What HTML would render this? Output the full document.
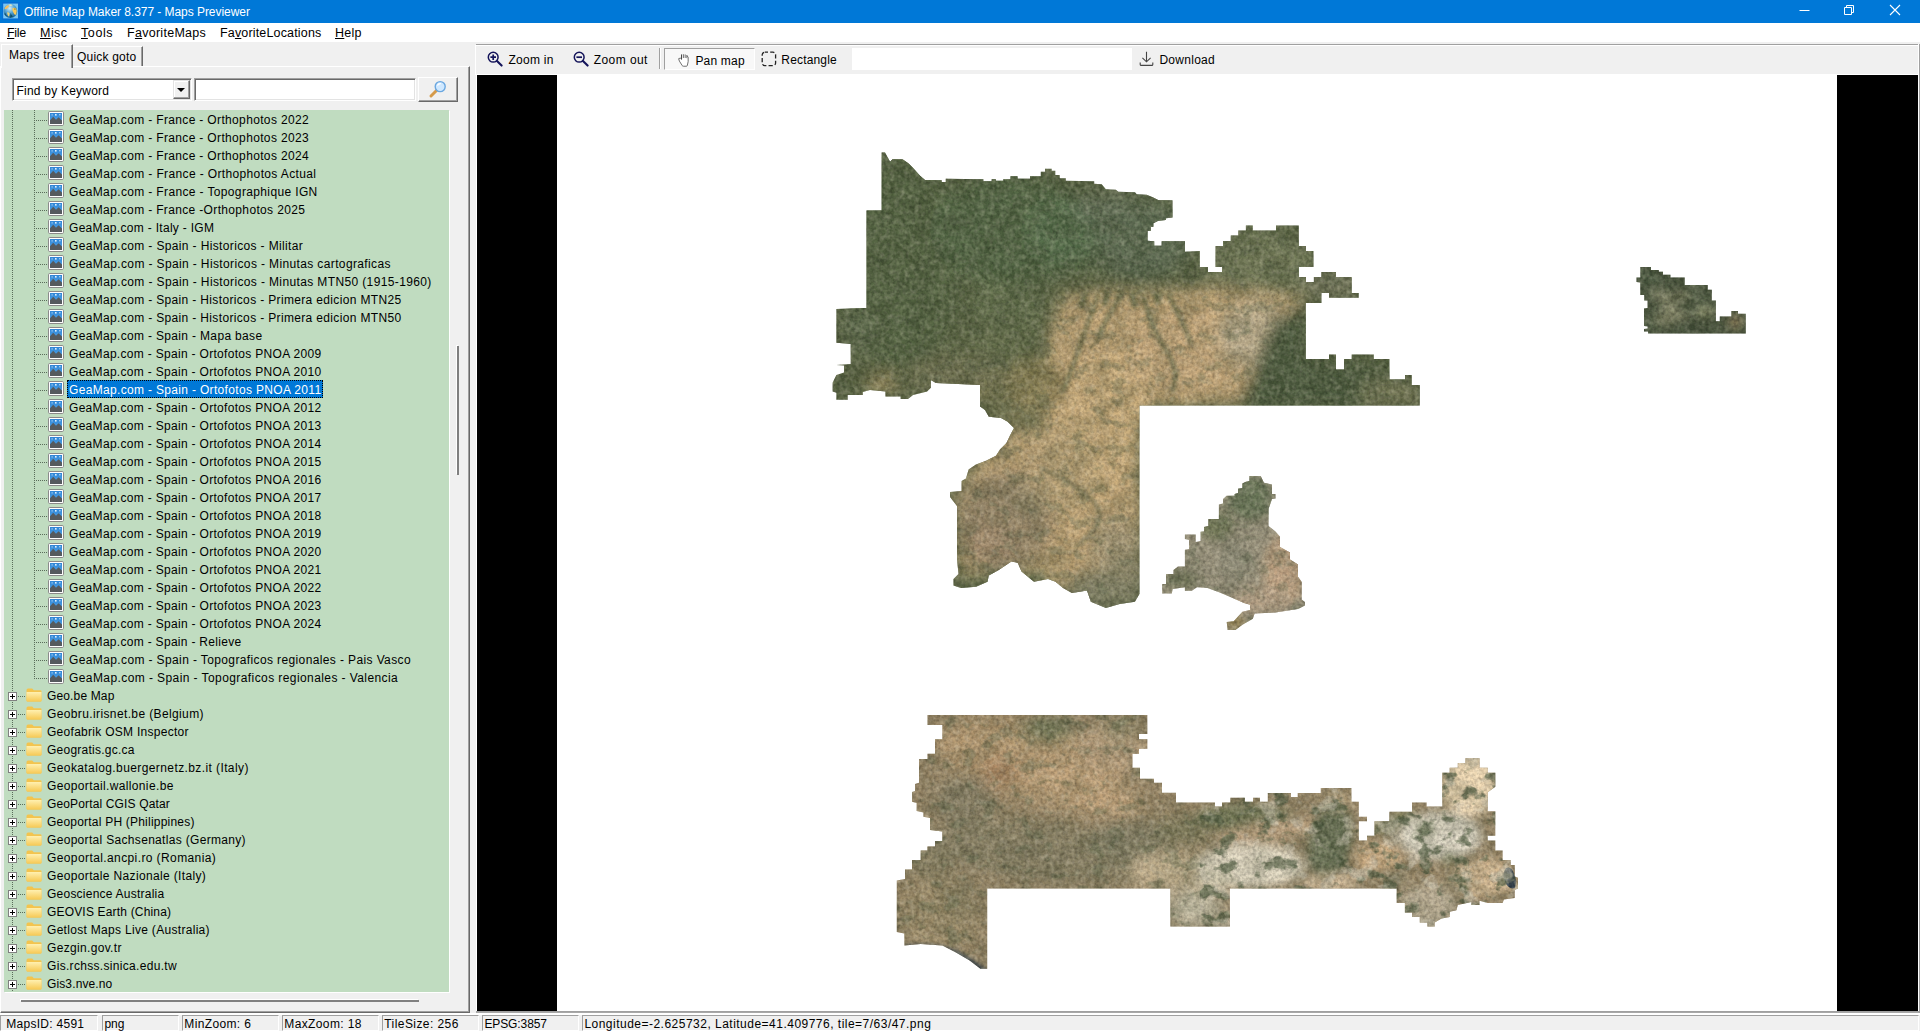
<!DOCTYPE html>
<html lang="en"><head><meta charset="utf-8"><title>Offline Map Maker 8.377 - Maps Previewer</title>
<style>
*{box-sizing:border-box;margin:0;padding:0}
html,body{width:1920px;height:1032px;overflow:hidden;background:#f0f0f0}
body{position:relative;font-family:"Liberation Sans",sans-serif;font-size:12px;color:#000;-webkit-font-smoothing:antialiased}
i{display:block;position:absolute;font-style:normal}
#titlebar{position:absolute;left:0;top:0;width:1920px;height:23px;background:#0078d7}
#appicon{position:absolute;left:1.6px;top:2px}
#title{position:absolute;left:24px;top:5px;color:#fff;font-size:12px;line-height:14px;letter-spacing:-0.05px;white-space:nowrap}
#wc{position:absolute;left:1780px;top:0}
#menubar{position:absolute;left:0;top:23px;width:1920px;height:19px;background:#fff}
#menubar span{position:absolute;top:3px;font-size:12.5px;line-height:14px;letter-spacing:0.28px;white-space:nowrap}
#menubar u{text-decoration:underline;text-underline-offset:1px}
#leftpanel{position:absolute;left:0;top:43px;width:472px;height:970px}
#tabpage{position:absolute;left:0;top:23px;width:470px;height:947px;border:1px solid #fff;border-right:1px solid #696969;border-bottom:1px solid #696969;background:#f0f0f0;box-shadow:inset -1px -1px 0 #a0a0a0}
.tab{position:absolute;white-space:nowrap;font-size:12px;line-height:14px}
#tab1{left:1px;top:1px;width:72px;height:24px;padding:3px 0 0 7px;letter-spacing:0.3px;background:#f0f0f0;border-top:1px solid #fff;border-left:1px solid #fff;border-right:1px solid #696969;box-shadow:inset -1px 0 0 #a0a0a0}
#tab2{left:73px;top:3px;width:70px;height:20px;padding:3px 0 0 4px;letter-spacing:0.2px;border-top:1px solid #fff;border-right:1px solid #696969;box-shadow:inset -1px 0 0 #a0a0a0}
#combo{position:absolute;left:12px;top:35px;width:180px;height:23px;background:#fff;border:1px solid #a0a0a0;border-right-color:#fff;border-bottom-color:#fff;box-shadow:inset 1px 1px 0 #696969,inset -1px -1px 0 #e3e3e3}
#combo span{position:absolute;left:3.5px;top:5px;line-height:14px;letter-spacing:0.22px;white-space:nowrap}
#combobtn{position:absolute;right:1px;top:1px;width:17px;height:19px;background:#f0f0f0;border:1px solid #e3e3e3;border-right-color:#696969;border-bottom-color:#696969;box-shadow:inset -1px -1px 0 #a0a0a0,inset 1px 1px 0 #fff}
#combobtn i{left:3px;top:7px;border:4px solid transparent;border-top:4px solid #000;border-bottom:0}
#kw{position:absolute;left:194px;top:35px;width:222px;height:23px;background:#fff;border:1px solid #a0a0a0;border-right-color:#fff;border-bottom-color:#fff;box-shadow:inset 1px 1px 0 #696969,inset -1px -1px 0 #e3e3e3}
#searchbtn{position:absolute;left:418px;top:34px;width:40px;height:25px;background:#f0f0f0;border:1px solid #fff;border-right-color:#696969;border-bottom-color:#696969;box-shadow:inset -1px -1px 0 #a0a0a0}
#searchbtn svg{position:absolute;left:9px;top:1px}
#tree{position:absolute;left:4px;top:67px;width:445px;height:882px;background:#c0dcc0;overflow:hidden;box-shadow:1px 1px 0 #fff}
#vline1{left:8px;top:0;width:1px;height:100%;background-image:linear-gradient(#5a6c5a 50%,transparent 50%);background-size:1px 2px}
#vline2{left:30px;top:0;width:1px;background-image:linear-gradient(#5a6c5a 50%,transparent 50%);background-size:1px 2px}
.row{position:absolute;left:0;width:445px;height:18px;white-space:nowrap}
.row .lbl{position:absolute;top:0;height:18px;line-height:15px;padding:3px 2px 0 2px;font-size:12px}
.leaf .lbl{left:63px}
.fold .lbl{left:41px}
.lbl.sel{background:#0078d7;color:#fff;outline:1px dotted #000;outline-offset:-1px}
.pic{position:absolute;left:44px;top:1px}
.fld{position:absolute;left:22px;top:1px}
.hl{left:32px;top:10px;width:12px;height:1px;background-image:linear-gradient(90deg,#5a6c5a 50%,transparent 50%);background-size:2px 1px}
.hl2{left:14px;top:10px;width:8px;height:1px;background-image:linear-gradient(90deg,#5a6c5a 50%,transparent 50%);background-size:2px 1px}
.plus{left:4px;top:6px;width:9px;height:9px;border:1px solid #808080;background:#fff}
.plus:before{content:"";position:absolute;left:1px;top:3px;width:5px;height:1px;background:#000}
.plus:after{content:"";position:absolute;left:3px;top:1px;width:1px;height:5px;background:#000}
#vthumb{left:457px;top:303px;width:2px;height:129px;background:#808080;box-shadow:-1px -1px 0 #fff}
#hthumb{left:21px;top:957px;width:398px;height:2px;background:#808080;box-shadow:-1px -1px 0 #fff}
#splitter{position:absolute;left:475px;top:45px;width:1px;height:30px;background:#fff}
#splitter2{position:absolute;left:476px;top:75px;width:1px;height:936px;background:#fff}
#redge{position:absolute;left:1918px;top:44px;width:2px;height:969px;border-left:1px solid #fff;border-right:1px solid #a0a0a0}
#bedge{position:absolute;left:476px;top:1011px;width:1443px;height:2px;border-top:1px solid #a0a0a0;background:#a8a8a8}
#toolbar{position:absolute;left:476px;top:44px;width:1442px;height:31px;border-top:1px solid #a0a0a0;border-bottom:1px solid #fff;box-shadow:inset 0 1px 0 #fff;background:#f0f0f0}
.tb{position:absolute;top:4px;height:22px}
.tb svg{position:absolute;left:0;top:2px}
.tb span{position:absolute;left:21px;top:4px;line-height:14px;white-space:nowrap}
#tbsep{left:183px;top:3px;width:2px;height:21px;border-left:1px solid #a0a0a0;border-right:1px solid #fff}
#panbtn{position:absolute;left:188px;top:3px;width:91px;height:22px;background:#f8f8f8;border:1px solid #a0a0a0;border-right-color:#fff;border-bottom-color:#fff}
#panbtn svg{position:absolute;left:12.6px;top:4.6px}
#panbtn span{position:absolute;left:30px;top:5px;line-height:14px;white-space:nowrap}
#tbedit{position:absolute;left:376px;top:3px;width:280px;height:22px;background:#fff}
#mapwrap{position:absolute;left:477px;top:75px;width:1441px;height:936px;background:#fff;overflow:hidden}
#mapwrap svg{position:absolute;left:0;top:0}
#statusbar{position:absolute;left:0;top:1013px;width:1920px;height:19px;background:#f0f0f0;border-top:2px solid #fff;border-bottom:1px solid #fff}
.sp{position:absolute;top:0;height:16px;border:1px solid #a0a0a0;border-right-color:#fff;border-bottom-color:#fff}
.sp span{position:absolute;left:3px;top:1px;line-height:14px;white-space:nowrap;font-size:12px}

</style></head><body>
<svg width="0" height="0" style="position:absolute">
<defs>
<linearGradient id="gsky" x1="0" y1="0" x2="0" y2="1"><stop offset="0" stop-color="#2f86d6"/><stop offset="1" stop-color="#56a6e8"/></linearGradient>
<linearGradient id="gfold" x1="0" y1="0" x2="0" y2="1"><stop offset="0" stop-color="#fff0b0"/><stop offset="1" stop-color="#f6c955"/></linearGradient>
<g id="ic-pic">
 <rect x="0.5" y="0.5" width="15" height="14" rx="1.2" fill="#fff" stroke="#8a8a8a"/>
 <rect x="2" y="2" width="12" height="11" fill="url(#gsky)"/>
 <path d="M2 13 V9.2 L5.2 5.8 L8 8.8 L10.6 6.2 L14 9.6 V13 Z" fill="#555a5e"/>
 <rect x="3.6" y="3.4" width="1" height="1" fill="#dff0ff"/><rect x="7" y="3" width="1.6" height="1.6" fill="#dff0ff"/><rect x="11.4" y="3" width="1" height="1.4" fill="#dff0ff"/>
</g>
<g id="ic-fold">
 <path d="M0.5 3.2 Q0.5 1.5 2 1.5 H6.2 L7.8 3.2 H14.6 Q15.5 3.2 15.5 4.2 V13.5 Q15.5 14.5 14.5 14.5 H1.5 Q0.5 14.5 0.5 13.5 Z" fill="#f3c44e"/>
 <path d="M0.5 5 H15.5 V13.5 Q15.5 14.5 14.5 14.5 H1.5 Q0.5 14.5 0.5 13.5 Z" fill="url(#gfold)"/>
</g>
</defs></svg>

<div id="titlebar">
 <svg id="appicon" width="18" height="18" viewBox="0 0 18 18"><defs><radialGradient id="gglobe" cx="0.45" cy="0.3" r="0.75"><stop offset="0" stop-color="#d6ecf4"/><stop offset="0.45" stop-color="#5aa6d6"/><stop offset="1" stop-color="#125a8c"/></radialGradient><filter id="ib"><feGaussianBlur stdDeviation="0.45"/></filter></defs><rect x="0" y="0" width="18" height="18" fill="#0a66d2" opacity="0.55"/><rect x="1.2" y="1.6" width="14.8" height="14.8" fill="#7cc6f4"/><g filter="url(#ib)"><circle cx="8.4" cy="9" r="6.9" fill="url(#gglobe)"/><path d="M2.4 6.6 Q3.6 3.4 6.4 3 Q7.6 4.2 6.2 5.8 Q5 6.8 3.6 7.2Z" fill="#f3bf62"/><path d="M6.2 2.8 Q8.6 1.6 10.6 3.2 Q9 4.2 7.6 3.8Z" fill="#e6e8c0"/><path d="M10.2 6.4 Q12.4 5.2 14.2 6.4 Q15.4 9 14.2 12.4 Q12.4 13.6 11.6 11 Q10.2 8.6 10.2 6.4Z" fill="#f6c95c"/><path d="M12.2 6.6 l1.6 0.2 l-0.2 0.8 l-1.4 -0.2z" fill="#7a6a20"/><path d="M5 10.6 Q6.6 9.8 7.6 11.6 Q7.8 13.6 6.6 14.6 Q5.4 13.2 5 10.6Z" fill="#ecd27a"/><path d="M3 10.5 Q4 13.6 6 15 Q4 14.6 2.6 12.6Z M8.6 11 Q9.6 13.6 11 14.6 Q9.4 15.6 8 15.4Z" fill="#0f4f6a"/></g></svg>
 <span id="title">Offline Map Maker 8.377 - Maps Previewer</span>
 <svg id="wc" width="140" height="23" viewBox="0 0 140 23">
  <path d="M19.5 10.5 H29.5" stroke="#fff" stroke-width="1" fill="none"/>
  <path d="M64.5 7.5 H71.5 V14.5 H64.5 Z M66.5 7.5 V5.5 H73.5 V12.5 H71.5" stroke="#fff" stroke-width="1" fill="none"/>
  <path d="M110 5 L120 15 M120 5 L110 15" stroke="#fff" stroke-width="1.1" fill="none"/>
 </svg>
</div>

<div id="menubar">
 <span style="left:7px;letter-spacing:-0.35px"><u>F</u>ile</span>
 <span style="left:40px;letter-spacing:0.45px"><u>M</u>isc</span>
 <span style="left:81px;letter-spacing:0.6px"><u>T</u>ools</span>
 <span style="left:127px">F<u>a</u>voriteMaps</span>
 <span style="left:220px;letter-spacing:0.16px">Fa<u>v</u>oriteLocations</span>
 <span style="left:335px"><u>H</u>elp</span>
</div>

<div id="leftpanel">
 <div id="tabpage"></div>
 <div id="tab1" class="tab">Maps tree</div>
 <div id="tab2" class="tab">Quick goto</div>
 <div id="combo"><span>Find by Keyword</span><div id="combobtn"><i></i></div></div>
 <div id="kw"></div>
 <div id="searchbtn"><svg width="20" height="20" viewBox="0 0 20 20"><path d="M3 17 L10 10" stroke="#d59a4a" stroke-width="3" stroke-linecap="round"/><circle cx="12.2" cy="7.6" r="5" fill="#cfe8ff" stroke="#6aa7e0" stroke-width="1.4"/><path d="M9.4 6.6 Q10.4 4.4 12.8 4.6" stroke="#fff" stroke-width="1.3" fill="none"/></svg></div>
 <div id="tree">
  <i id="vline1"></i><i id="vline2" style="height:569px"></i>
  <div class="row leaf" style="top:0px"><i class="hl"></i><svg class="pic" width="16" height="16" viewBox="0 0 16 16"><use href="#ic-pic"/></svg><span class="lbl" style="letter-spacing:0.348px">GeaMap.com - France - Orthophotos 2022</span></div><div class="row leaf" style="top:18px"><i class="hl"></i><svg class="pic" width="16" height="16" viewBox="0 0 16 16"><use href="#ic-pic"/></svg><span class="lbl" style="letter-spacing:0.348px">GeaMap.com - France - Orthophotos 2023</span></div><div class="row leaf" style="top:36px"><i class="hl"></i><svg class="pic" width="16" height="16" viewBox="0 0 16 16"><use href="#ic-pic"/></svg><span class="lbl" style="letter-spacing:0.348px">GeaMap.com - France - Orthophotos 2024</span></div><div class="row leaf" style="top:54px"><i class="hl"></i><svg class="pic" width="16" height="16" viewBox="0 0 16 16"><use href="#ic-pic"/></svg><span class="lbl" style="letter-spacing:0.363px">GeaMap.com - France - Orthophotos Actual</span></div><div class="row leaf" style="top:72px"><i class="hl"></i><svg class="pic" width="16" height="16" viewBox="0 0 16 16"><use href="#ic-pic"/></svg><span class="lbl" style="letter-spacing:0.36px">GeaMap.com - France - Topographique IGN</span></div><div class="row leaf" style="top:90px"><i class="hl"></i><svg class="pic" width="16" height="16" viewBox="0 0 16 16"><use href="#ic-pic"/></svg><span class="lbl" style="letter-spacing:0.345px">GeaMap.com - France -Orthophotos 2025</span></div><div class="row leaf" style="top:108px"><i class="hl"></i><svg class="pic" width="16" height="16" viewBox="0 0 16 16"><use href="#ic-pic"/></svg><span class="lbl" style="letter-spacing:0.303px">GeaMap.com - Italy - IGM</span></div><div class="row leaf" style="top:126px"><i class="hl"></i><svg class="pic" width="16" height="16" viewBox="0 0 16 16"><use href="#ic-pic"/></svg><span class="lbl" style="letter-spacing:0.361px">GeaMap.com - Spain - Historicos - Militar</span></div><div class="row leaf" style="top:144px"><i class="hl"></i><svg class="pic" width="16" height="16" viewBox="0 0 16 16"><use href="#ic-pic"/></svg><span class="lbl" style="letter-spacing:0.372px">GeaMap.com - Spain - Historicos - Minutas cartograficas</span></div><div class="row leaf" style="top:162px"><i class="hl"></i><svg class="pic" width="16" height="16" viewBox="0 0 16 16"><use href="#ic-pic"/></svg><span class="lbl" style="letter-spacing:0.371px">GeaMap.com - Spain - Historicos - Minutas MTN50 (1915-1960)</span></div><div class="row leaf" style="top:180px"><i class="hl"></i><svg class="pic" width="16" height="16" viewBox="0 0 16 16"><use href="#ic-pic"/></svg><span class="lbl" style="letter-spacing:0.347px">GeaMap.com - Spain - Historicos - Primera edicion MTN25</span></div><div class="row leaf" style="top:198px"><i class="hl"></i><svg class="pic" width="16" height="16" viewBox="0 0 16 16"><use href="#ic-pic"/></svg><span class="lbl" style="letter-spacing:0.347px">GeaMap.com - Spain - Historicos - Primera edicion MTN50</span></div><div class="row leaf" style="top:216px"><i class="hl"></i><svg class="pic" width="16" height="16" viewBox="0 0 16 16"><use href="#ic-pic"/></svg><span class="lbl" style="letter-spacing:0.333px">GeaMap.com - Spain - Mapa base</span></div><div class="row leaf" style="top:234px"><i class="hl"></i><svg class="pic" width="16" height="16" viewBox="0 0 16 16"><use href="#ic-pic"/></svg><span class="lbl" style="letter-spacing:0.307px">GeaMap.com - Spain - Ortofotos PNOA 2009</span></div><div class="row leaf" style="top:252px"><i class="hl"></i><svg class="pic" width="16" height="16" viewBox="0 0 16 16"><use href="#ic-pic"/></svg><span class="lbl" style="letter-spacing:0.307px">GeaMap.com - Spain - Ortofotos PNOA 2010</span></div><div class="row leaf" style="top:270px"><i class="hl"></i><svg class="pic" width="16" height="16" viewBox="0 0 16 16"><use href="#ic-pic"/></svg><span class="lbl sel" style="letter-spacing:0.329px">GeaMap.com - Spain - Ortofotos PNOA 2011</span></div><div class="row leaf" style="top:288px"><i class="hl"></i><svg class="pic" width="16" height="16" viewBox="0 0 16 16"><use href="#ic-pic"/></svg><span class="lbl" style="letter-spacing:0.307px">GeaMap.com - Spain - Ortofotos PNOA 2012</span></div><div class="row leaf" style="top:306px"><i class="hl"></i><svg class="pic" width="16" height="16" viewBox="0 0 16 16"><use href="#ic-pic"/></svg><span class="lbl" style="letter-spacing:0.307px">GeaMap.com - Spain - Ortofotos PNOA 2013</span></div><div class="row leaf" style="top:324px"><i class="hl"></i><svg class="pic" width="16" height="16" viewBox="0 0 16 16"><use href="#ic-pic"/></svg><span class="lbl" style="letter-spacing:0.307px">GeaMap.com - Spain - Ortofotos PNOA 2014</span></div><div class="row leaf" style="top:342px"><i class="hl"></i><svg class="pic" width="16" height="16" viewBox="0 0 16 16"><use href="#ic-pic"/></svg><span class="lbl" style="letter-spacing:0.307px">GeaMap.com - Spain - Ortofotos PNOA 2015</span></div><div class="row leaf" style="top:360px"><i class="hl"></i><svg class="pic" width="16" height="16" viewBox="0 0 16 16"><use href="#ic-pic"/></svg><span class="lbl" style="letter-spacing:0.307px">GeaMap.com - Spain - Ortofotos PNOA 2016</span></div><div class="row leaf" style="top:378px"><i class="hl"></i><svg class="pic" width="16" height="16" viewBox="0 0 16 16"><use href="#ic-pic"/></svg><span class="lbl" style="letter-spacing:0.307px">GeaMap.com - Spain - Ortofotos PNOA 2017</span></div><div class="row leaf" style="top:396px"><i class="hl"></i><svg class="pic" width="16" height="16" viewBox="0 0 16 16"><use href="#ic-pic"/></svg><span class="lbl" style="letter-spacing:0.307px">GeaMap.com - Spain - Ortofotos PNOA 2018</span></div><div class="row leaf" style="top:414px"><i class="hl"></i><svg class="pic" width="16" height="16" viewBox="0 0 16 16"><use href="#ic-pic"/></svg><span class="lbl" style="letter-spacing:0.307px">GeaMap.com - Spain - Ortofotos PNOA 2019</span></div><div class="row leaf" style="top:432px"><i class="hl"></i><svg class="pic" width="16" height="16" viewBox="0 0 16 16"><use href="#ic-pic"/></svg><span class="lbl" style="letter-spacing:0.307px">GeaMap.com - Spain - Ortofotos PNOA 2020</span></div><div class="row leaf" style="top:450px"><i class="hl"></i><svg class="pic" width="16" height="16" viewBox="0 0 16 16"><use href="#ic-pic"/></svg><span class="lbl" style="letter-spacing:0.307px">GeaMap.com - Spain - Ortofotos PNOA 2021</span></div><div class="row leaf" style="top:468px"><i class="hl"></i><svg class="pic" width="16" height="16" viewBox="0 0 16 16"><use href="#ic-pic"/></svg><span class="lbl" style="letter-spacing:0.307px">GeaMap.com - Spain - Ortofotos PNOA 2022</span></div><div class="row leaf" style="top:486px"><i class="hl"></i><svg class="pic" width="16" height="16" viewBox="0 0 16 16"><use href="#ic-pic"/></svg><span class="lbl" style="letter-spacing:0.307px">GeaMap.com - Spain - Ortofotos PNOA 2023</span></div><div class="row leaf" style="top:504px"><i class="hl"></i><svg class="pic" width="16" height="16" viewBox="0 0 16 16"><use href="#ic-pic"/></svg><span class="lbl" style="letter-spacing:0.307px">GeaMap.com - Spain - Ortofotos PNOA 2024</span></div><div class="row leaf" style="top:522px"><i class="hl"></i><svg class="pic" width="16" height="16" viewBox="0 0 16 16"><use href="#ic-pic"/></svg><span class="lbl" style="letter-spacing:0.301px">GeaMap.com - Spain - Relieve</span></div><div class="row leaf" style="top:540px"><i class="hl"></i><svg class="pic" width="16" height="16" viewBox="0 0 16 16"><use href="#ic-pic"/></svg><span class="lbl" style="letter-spacing:0.379px">GeaMap.com - Spain - Topograficos regionales - Pais Vasco</span></div><div class="row leaf" style="top:558px"><i class="hl"></i><svg class="pic" width="16" height="16" viewBox="0 0 16 16"><use href="#ic-pic"/></svg><span class="lbl" style="letter-spacing:0.415px">GeaMap.com - Spain - Topograficos regionales - Valencia</span></div><div class="row fold" style="top:576px"><i class="hl2"></i><i class="plus"></i><svg class="fld" width="16" height="16" viewBox="0 0 16 16"><use href="#ic-fold"/></svg><span class="lbl" style="letter-spacing:0.146px">Geo.be Map</span></div><div class="row fold" style="top:594px"><i class="hl2"></i><i class="plus"></i><svg class="fld" width="16" height="16" viewBox="0 0 16 16"><use href="#ic-fold"/></svg><span class="lbl" style="letter-spacing:0.377px">Geobru.irisnet.be (Belgium)</span></div><div class="row fold" style="top:612px"><i class="hl2"></i><i class="plus"></i><svg class="fld" width="16" height="16" viewBox="0 0 16 16"><use href="#ic-fold"/></svg><span class="lbl" style="letter-spacing:0.279px">Geofabrik OSM Inspector</span></div><div class="row fold" style="top:630px"><i class="hl2"></i><i class="plus"></i><svg class="fld" width="16" height="16" viewBox="0 0 16 16"><use href="#ic-fold"/></svg><span class="lbl" style="letter-spacing:0.244px">Geogratis.gc.ca</span></div><div class="row fold" style="top:648px"><i class="hl2"></i><i class="plus"></i><svg class="fld" width="16" height="16" viewBox="0 0 16 16"><use href="#ic-fold"/></svg><span class="lbl" style="letter-spacing:0.399px">Geokatalog.buergernetz.bz.it (Italy)</span></div><div class="row fold" style="top:666px"><i class="hl2"></i><i class="plus"></i><svg class="fld" width="16" height="16" viewBox="0 0 16 16"><use href="#ic-fold"/></svg><span class="lbl" style="letter-spacing:0.362px">Geoportail.wallonie.be</span></div><div class="row fold" style="top:684px"><i class="hl2"></i><i class="plus"></i><svg class="fld" width="16" height="16" viewBox="0 0 16 16"><use href="#ic-fold"/></svg><span class="lbl" style="letter-spacing:0.143px">GeoPortal CGIS Qatar</span></div><div class="row fold" style="top:702px"><i class="hl2"></i><i class="plus"></i><svg class="fld" width="16" height="16" viewBox="0 0 16 16"><use href="#ic-fold"/></svg><span class="lbl" style="letter-spacing:0.213px">Geoportal PH (Philippines)</span></div><div class="row fold" style="top:720px"><i class="hl2"></i><i class="plus"></i><svg class="fld" width="16" height="16" viewBox="0 0 16 16"><use href="#ic-fold"/></svg><span class="lbl" style="letter-spacing:0.317px">Geoportal Sachsenatlas (Germany)</span></div><div class="row fold" style="top:738px"><i class="hl2"></i><i class="plus"></i><svg class="fld" width="16" height="16" viewBox="0 0 16 16"><use href="#ic-fold"/></svg><span class="lbl" style="letter-spacing:0.397px">Geoportal.ancpi.ro (Romania)</span></div><div class="row fold" style="top:756px"><i class="hl2"></i><i class="plus"></i><svg class="fld" width="16" height="16" viewBox="0 0 16 16"><use href="#ic-fold"/></svg><span class="lbl" style="letter-spacing:0.35px">Geoportale Nazionale (Italy)</span></div><div class="row fold" style="top:774px"><i class="hl2"></i><i class="plus"></i><svg class="fld" width="16" height="16" viewBox="0 0 16 16"><use href="#ic-fold"/></svg><span class="lbl" style="letter-spacing:0.234px">Geoscience Australia</span></div><div class="row fold" style="top:792px"><i class="hl2"></i><i class="plus"></i><svg class="fld" width="16" height="16" viewBox="0 0 16 16"><use href="#ic-fold"/></svg><span class="lbl" style="letter-spacing:0.174px">GEOVIS Earth (China)</span></div><div class="row fold" style="top:810px"><i class="hl2"></i><i class="plus"></i><svg class="fld" width="16" height="16" viewBox="0 0 16 16"><use href="#ic-fold"/></svg><span class="lbl" style="letter-spacing:0.305px">Getlost Maps Live (Australia)</span></div><div class="row fold" style="top:828px"><i class="hl2"></i><i class="plus"></i><svg class="fld" width="16" height="16" viewBox="0 0 16 16"><use href="#ic-fold"/></svg><span class="lbl" style="letter-spacing:0.325px">Gezgin.gov.tr</span></div><div class="row fold" style="top:846px"><i class="hl2"></i><i class="plus"></i><svg class="fld" width="16" height="16" viewBox="0 0 16 16"><use href="#ic-fold"/></svg><span class="lbl" style="letter-spacing:0.313px">Gis.rchss.sinica.edu.tw</span></div><div class="row fold" style="top:864px"><i class="hl2"></i><i class="plus"></i><svg class="fld" width="16" height="16" viewBox="0 0 16 16"><use href="#ic-fold"/></svg><span class="lbl" style="letter-spacing:0.124px">Gis3.nve.no</span></div>
 </div>
 <i id="vthumb"></i><i id="hthumb"></i>
</div>

<div id="splitter"></div><div id="splitter2"></div><div id="redge"></div><div id="bedge"></div>

<div id="toolbar">
 <div class="tb" style="left:11px;width:70px"><svg width="16" height="16" viewBox="0 0 16 16"><circle cx="6.2" cy="6.2" r="4.9" fill="none" stroke="#14145a" stroke-width="1.5"/><path d="M10 10 L14.6 14.6" stroke="#14145a" stroke-width="2.1" stroke-linecap="round"/><path d="M3.4 6.2 H9 M6.2 3.4 V9" stroke="#14145a" stroke-width="1.7"/></svg><span style="left:21.399999999999977px;letter-spacing:0.279px">Zoom in</span></div>
 <div class="tb" style="left:97px;width:80px"><svg width="16" height="16" viewBox="0 0 16 16"><circle cx="6.2" cy="6.2" r="4.9" fill="none" stroke="#14145a" stroke-width="1.5"/><path d="M10 10 L14.6 14.6" stroke="#14145a" stroke-width="2.1" stroke-linecap="round"/><path d="M3.4 6.2 H9" stroke="#14145a" stroke-width="1.7"/></svg><span style="left:20.7px;letter-spacing:0.439px">Zoom out</span></div>
 <i id="tbsep"></i>
 <div id="panbtn"><svg width="11.2" height="13.1" viewBox="0 0 12 14"><path d="M3.7 5.4 L2.4 4.4 L0.7 5 L1.5 7.6 L4.6 12.5 Q5 13.1 5.8 13.1 H9 Q9.8 13.1 10 12.3 L10.9 8 V3.6 L9.7 1.7 L9.4 3.4 L7.7 0.9 V3 L5.8 0.6 V3 L3.8 0.6 Z" fill="#fff" stroke="none"/><path d="M3.6 5.2 L2.4 4.4 L0.7 5 L1.5 7.6 L4.6 12.5 Q5 13.1 5.8 13.1 H9 Q9.8 13.1 10 12.3 L10.9 8 V3.6 L9.7 1.7" fill="none" stroke="#555" stroke-width="0.9" stroke-linejoin="round" stroke-linecap="round"/><path d="M3.8 0.7 V5.3" stroke="#444" stroke-width="1.1" fill="none" stroke-linecap="round"/><path d="M5.8 0.7 V3.8 M7.7 0.9 V3.8 M9.5 1.8 V4" stroke="#555" stroke-width="0.9" fill="none" stroke-linecap="round"/></svg><span style="left:30.4px;letter-spacing:0.196px">Pan map</span></div>
 <div class="tb" style="left:285px;width:80px"><svg width="16" height="16" viewBox="0 0 16 16"><rect x="1.2" y="1.2" width="13.4" height="13.4" rx="2.6" fill="none" stroke="#222" stroke-width="1.3" stroke-dasharray="4.2 2.2" stroke-dashoffset="1"/></svg><span style="left:20.3px;letter-spacing:0.174px">Rectangle</span></div>
 <div id="tbedit"></div>
 <div class="tb" style="left:663px;width:80px"><svg width="16" height="16" viewBox="0 0 16 16"><path d="M7.5 0.8 V10.6 M3.4 6.8 L7.5 10.8 L11.6 6.8" fill="none" stroke="#444" stroke-width="1.1"/><path d="M1.2 11.6 V13.4 Q1.2 14.4 2.2 14.4 H12.8 Q13.8 14.4 13.8 13.4 V11.6" fill="none" stroke="#444" stroke-width="1.1"/></svg><span style="left:20.4px;letter-spacing:0.279px">Download</span></div>
</div>

<div id="mapwrap">
<svg width="1441" height="936" viewBox="477 75 1441 936">
<defs>
<filter id="bl8" x="-30%" y="-30%" width="160%" height="160%"><feGaussianBlur stdDeviation="8"/></filter>
<filter id="bl4" x="-30%" y="-30%" width="160%" height="160%"><feGaussianBlur stdDeviation="4"/></filter>
<filter id="bl2" x="-30%" y="-30%" width="160%" height="160%"><feGaussianBlur stdDeviation="2"/></filter>
<filter id="tex" x="0" y="0" width="100%" height="100%" color-interpolation-filters="sRGB">
 <feTurbulence type="fractalNoise" baseFrequency="0.32" numOctaves="2" seed="7" result="n"/>
 <feColorMatrix in="n" type="matrix" values="0 0 0 0 0  0 0 0 0 0  0 0 0 0 0  1.3 1.0 0 0 -0.85"/>
</filter>
<filter id="tex2" x="0" y="0" width="100%" height="100%" color-interpolation-filters="sRGB">
 <feTurbulence type="fractalNoise" baseFrequency="0.045 0.06" numOctaves="3" seed="23" result="n"/>
 <feColorMatrix in="n" type="matrix" values="0 0 0 0 0.12  0 0 0 0 0.16  0 0 0 0 0.08  0 1.8 1.2 0 -1.15"/>
</filter>
<filter id="patch" x="0" y="0" width="100%" height="100%" color-interpolation-filters="sRGB">
 <feTurbulence type="fractalNoise" baseFrequency="0.055 0.07" numOctaves="4" seed="5" result="n"/>
 <feColorMatrix in="n" type="matrix" values="0 0 0 0 0.33  0 0 0 0 0.38  0 0 0 0 0.27  7 0 0 0 -3.9"/>
</filter>
<filter id="patchL" x="0" y="0" width="100%" height="100%" color-interpolation-filters="sRGB">
 <feTurbulence type="fractalNoise" baseFrequency="0.05 0.06" numOctaves="4" seed="88" result="n"/>
 <feColorMatrix in="n" type="matrix" values="0 0 0 0 0.86  0 0 0 0 0.83  0 0 0 0 0.75  0 7 0 0 -4.0"/>
</filter>
<filter id="tex3" x="0" y="0" width="100%" height="100%" color-interpolation-filters="sRGB">
 <feTurbulence type="fractalNoise" baseFrequency="0.2" numOctaves="2" seed="41" result="n"/>
 <feColorMatrix in="n" type="matrix" values="0 0 0 0 1  0 0 0 0 0.97  0 0 0 0 0.88  1.4 0 1.0 0 -0.95"/>
</filter>

<clipPath id="cpMain"><polygon points="881.7,152.5 885,152.5 890,161.7 892.5,159.2 902.5,159.2 908.3,163.3 913.3,168.3 920,175.8 925,180 941.7,180.3 941.7,182 945.8,182 945.8,178.8 983.3,179.2 983.3,181.3 991.7,181.3 991.7,179.2 995.8,179.2 995.8,180.8 1003.3,180.8 1003.3,179.2 1010.5,179.2 1010.5,176.2 1017.5,176.2 1017.5,178.8 1030,178.8 1030,176.2 1040.8,176.2 1040.8,171.7 1045,171.7 1045,168.7 1051.7,168.7 1051.7,170.8 1055.3,170.8 1055.3,175 1059.7,175 1059.7,178.3 1065.8,178.3 1065.8,180.8 1094.2,181.3 1094.2,183.7 1101.7,184.2 1105.8,189.2 1115.8,189.7 1118.3,191.7 1135,192.2 1136.7,194.2 1146.7,194.7 1153.3,197.5 1158.3,200 1172.5,200.3 1172.5,217.5 1165.8,218.3 1165.8,220 1158.3,220.8 1153.3,223.3 1153.3,226.7 1150.8,226.7 1150.8,230.8 1147.5,230.8 1147.5,240.8 1154.2,241.3 1154.2,245.8 1161.7,245.8 1161.7,241.3 1185,241.3 1185,251.7 1199.8,251 1199.8,267 1208,267 1208,272 1222,272 1222,267 1215.6,267 1215.6,246 1223,246 1223,241 1230.8,241 1230.8,235.6 1238.3,235.6 1238.3,230.5 1245.9,230.5 1245.9,225.5 1252.7,225.5 1252.7,230.5 1276,230.5 1276,225.5 1298.8,225.5 1298.8,246 1306,246 1306,251 1313.4,251 1313.4,267 1298.8,267 1298.8,277 1306,277 1306,282 1313.9,282 1313.9,277 1321.4,277 1321.4,272 1336,272 1336,277 1351.7,277 1351.7,293 1358.7,293 1358.7,297.8 1329,297.8 1329,293 1321.4,293 1321.4,303 1305.8,303 1305.8,359 1329,359 1329,354.5 1336,354.5 1336,369.6 1344,369.6 1344,359 1351.7,359 1351.7,354.5 1373.8,354.5 1373.8,359 1389.4,359 1389.4,379.6 1405,379.6 1405,374.9 1411.6,374.9 1411.6,385 1419.7,385 1419.7,405.6 1139.4,405.6 1139.4,594 1134.9,601.8 1119.7,604 1105.9,608 1090.8,601.8 1087,590.5 1071.9,593 1063,588 1055.5,581.7 1048,579 1034,581.7 1021.5,571.6 1017.7,562.8 1011.4,561.5 998.8,570 988.8,575.4 987.5,581.7 976,586.7 961,588 953.5,585.4 953.5,579 958.5,574 957,559 957,506 950,497 950,492 961.6,491 961.6,481 966,478.4 968.6,469.6 976,464.5 986,460.8 996,455.7 1000,449.4 1006.4,443 1010,435.6 1014,428 1007.7,421.7 1001,418 988.8,416.7 985,410 980,406.6 980,385 935.9,383 930.8,380 930.8,387.7 927,391.5 913,395 908,399 900.6,399 900.6,396.5 885.5,396.5 885.5,391.5 870,390 862.8,392 862.8,395 847.7,395 847.7,399.8 836.4,399.8 836.4,392.7 832.6,391.5 832.6,382.7 836.4,375 844,372.6 844,365.5 836.4,365 850.7,364 850.7,344 836.4,342.8 836.4,309 866.6,308 866.6,210.5 881.7,210.5"/></clipPath>
<clipPath id="cpMad"><polygon points="1249.4,476 1260.7,476 1264,482.7 1272,484.4 1272,494 1275.5,494 1275.5,498.4 1272,499 1268.6,508.8 1268.6,526 1275.5,531.5 1280,536.7 1280,547 1290,552.4 1290,559.4 1298,564.6 1298,576.8 1301.7,582 1301.7,599.5 1305,602 1305,605.6 1298,609 1275.5,612.6 1254.6,613.4 1252.9,618.7 1242.4,624.8 1235.4,630 1227.6,630 1226.7,622 1233.7,621.3 1242.4,611.7 1250,610 1250,604.7 1244,603 1232,597.7 1219.7,592.5 1207.5,588 1197,587.3 1191.8,590.8 1184.9,590.8 1184.9,587.3 1172.7,589 1171.8,593.4 1162.2,593.4 1162.2,584 1166,584 1166,574 1173.5,574 1173.5,569.9 1178,566.4 1184.9,566.4 1184.9,549.8 1189,549 1189,540 1184.9,539 1184.9,534.6 1195.7,534.6 1195.7,542 1200.6,541 1200.6,531.8 1204,531.5 1204,527 1208.4,526 1208.4,519 1218.9,519 1218.9,504.5 1223,503.6 1223,499 1226.7,495.7 1234.6,495.7 1234.6,494 1238,493 1238,488.8 1242.4,487.9 1242.4,483.5 1245.9,481.8 1249.4,481"/></clipPath>
<clipPath id="cpRio"><polygon points="1640.3,267 1651,267 1651,269.9 1658.8,269.9 1658.8,271.8 1663,271.8 1663,274.7 1670.4,274.7 1670.4,277.6 1684.7,277.6 1684.7,285 1707.7,285 1707.7,289.7 1711.8,289.7 1711.8,300.4 1715.9,300.4 1715.9,321.2 1719.8,321.2 1719.8,316.4 1731.4,316.4 1731.4,311 1738,311 1738,313.8 1745.8,313.8 1745.8,333.5 1648,333.5 1648,331.4 1644,331.4 1644,329 1647.6,328.5 1647.6,326.5 1644,326 1644,308.6 1647.6,308 1647.6,300.4 1644.2,300.4 1644.2,295 1640.3,295 1640.3,282.5 1636.5,282 1636.5,277.6 1640.3,277.6"/></clipPath>
<clipPath id="cpSou"><polygon points="927.5,715 1147.3,715 1147.3,734 1139,734 1139,739.3 1147.3,739.3 1147.3,748.8 1139,748.8 1139,753.7 1132.4,753.7 1132.4,767.8 1140,767.8 1140,778.7 1154,778.7 1154,782.8 1162,782.8 1162,792.8 1176,792.8 1176,802.6 1215,802.6 1215,806.4 1222,806.4 1222,802.6 1230.4,802.6 1230.4,797.7 1244.8,797.7 1244.8,801.8 1253,801.8 1253,797.7 1260,797.7 1260,801.8 1267.8,801.8 1267.8,793 1291,793 1291,797 1297.7,797 1297.7,793 1320.8,793 1320.8,788 1351.4,788 1351.4,801.8 1358.8,801.8 1358.8,816.7 1367,816.7 1367,821.3 1358.8,821.3 1358.8,840.6 1367,840.6 1367,835.7 1374.5,835.7 1374.5,821.3 1389.4,821.3 1389.4,811.8 1412,811.8 1412,802.6 1426.6,802.6 1426.6,806.4 1442.3,806.4 1442.3,772.7 1449.7,772.7 1449.7,767.8 1457.8,767.8 1457.8,763 1465.4,763 1465.4,758.3 1479.5,758.3 1479.5,767.8 1487.7,767.8 1487.7,772.7 1495.3,772.7 1495.3,786.8 1487.7,792.3 1487.7,811.3 1495.3,811.3 1495.3,835.7 1487.7,835.7 1487.7,840.6 1495.3,840.6 1495.3,850.6 1502.6,850.6 1502.6,860 1510.7,860 1510.7,865 1514.8,865 1514.8,876.4 1518,877.7 1518,888.6 1514.8,890 1514.8,898 1504,899.5 1502.6,903 1487.7,903 1479.5,900.8 1479.5,904.9 1471.4,904.9 1471.4,902 1457.8,904.9 1456.4,910.3 1449.7,911.7 1449.7,917 1441.5,918.5 1434.7,922.5 1434.7,926.6 1427.4,926.6 1427.4,922.5 1419.8,922.5 1419.8,917 1412,917 1412,912.5 1404.9,912.5 1404.9,903 1396.7,903 1396.7,888.6 1229.9,888.6 1229.9,926.6 1170.4,926.6 1170.4,888.6 987.2,888.6 987.2,968.7 980.4,968.7 969.6,960.5 956,952.4 942.4,945.6 920.7,944 904.4,945.6 904.4,933.4 896.8,932 896.8,880.5 905,879 905,869.6 912,869.6 912,860 920.7,860 920.7,850.6 927.5,850.6 927.5,846.5 935,846.5 935,841 942.4,841 942.4,831.6 930,830 930,818 923.4,816.7 923.4,812.6 916.6,811 916.6,803 912,801.8 912,792 915,791 915,784 919,782.8 919,759 927.5,759 927.5,753.7 935,753.7 935,739.3 942.4,739.3 942.4,725 927.5,725"/></clipPath>
</defs>
<rect x="477" y="75" width="80" height="936" fill="#000"/><rect x="1837" y="75" width="81" height="936" fill="#000"/>
<g clip-path="url(#cpMain)">
<rect x="820" y="140" width="620" height="480" fill="#5c6745"/>
<g filter="url(#bl8)">
<ellipse cx="900" cy="260" rx="60" ry="110" fill="#596845" opacity="1"/>
<ellipse cx="1010" cy="230" rx="80" ry="55" fill="#566b47" opacity="1"/>
<ellipse cx="1070" cy="232" rx="42" ry="36" fill="#59734f" opacity="0.8"/>
<ellipse cx="1120" cy="212" rx="48" ry="16" fill="#6f7a63" opacity="0.85" transform="rotate(8 1120 212)"/>
<ellipse cx="1150" cy="232" rx="20" ry="14" fill="#787f63" opacity="0.7"/>
<ellipse cx="1140" cy="240" rx="50" ry="40" fill="#617054" opacity="0.9"/>
<polygon points="1062,296 1100,290 1150,292 1200,287 1250,290 1304,298 1304,330 1268,326 1240,402 1139,408 1142,598 1090,602 1060,588 1030,578 1000,568 960,572 953,500 975,465 1010,437 1012,425 1040,432 1046,380 1050,340" fill="#c9ac7c" opacity="1"/>
<ellipse cx="1100" cy="430" rx="42" ry="85" fill="#d2b481" opacity="0.9" transform="rotate(22 1100 430)"/>
<ellipse cx="1190" cy="350" rx="65" ry="38" fill="#ceaf81" opacity="0.9" transform="rotate(-8 1190 350)"/>
<ellipse cx="1255" cy="335" rx="38" ry="32" fill="#c3b594" opacity="0.9"/>
<ellipse cx="1000" cy="340" rx="55" ry="30" fill="#66714d" opacity="0.85" transform="rotate(-15 1000 340)"/>
<ellipse cx="960" cy="375" rx="55" ry="22" fill="#767754" opacity="0.8"/>
<ellipse cx="1035" cy="385" rx="30" ry="28" fill="#958859" opacity="0.75"/>
<ellipse cx="1000" cy="420" rx="22" ry="14" fill="#787a54" opacity="0.8"/>
<ellipse cx="1020" cy="405" rx="16" ry="10" fill="#a79568" opacity="0.7"/>
<ellipse cx="985" cy="395" rx="14" ry="8" fill="#9f9163" opacity="0.6"/>
<ellipse cx="1000" cy="300" rx="40" ry="20" fill="#697854" opacity="0.6"/>
<ellipse cx="1260" cy="262" rx="55" ry="30" fill="#747c58" opacity="0.95"/>
<ellipse cx="1330" cy="285" rx="30" ry="13" fill="#828366" opacity="0.9"/>
<polygon points="1272,322 1306,300 1306,360 1422,372 1422,408 1236,408" fill="#516042" opacity="1"/>
<ellipse cx="1392" cy="394" rx="34" ry="16" fill="#7a7c58" opacity="0.85"/>
<ellipse cx="1005" cy="520" rx="48" ry="50" fill="#9c8a6c" opacity="0.95"/>
<ellipse cx="990" cy="545" rx="25" ry="20" fill="#b09576" opacity="0.7"/>
<ellipse cx="1030" cy="500" rx="20" ry="16" fill="#91896b" opacity="0.7"/>
<ellipse cx="1060" cy="470" rx="35" ry="40" fill="#bea77a" opacity="0.7"/>
<ellipse cx="985" cy="582" rx="32" ry="9" fill="#67714d" opacity="0.95"/>
<ellipse cx="1035" cy="575" rx="20" ry="8" fill="#6b7450" opacity="0.8"/>
<ellipse cx="1105" cy="588" rx="40" ry="20" fill="#838366" opacity="0.95"/>
<ellipse cx="1125" cy="565" rx="18" ry="20" fill="#8d896c" opacity="0.8"/>
<ellipse cx="1115" cy="545" rx="25" ry="28" fill="#a69b79" opacity="0.8"/>
<ellipse cx="882" cy="383" rx="18" ry="9" fill="#b09c6c" opacity="0.9"/>
<ellipse cx="858" cy="330" rx="18" ry="22" fill="#667354" opacity="0.8"/>
</g>
<g filter="url(#bl2)" fill="none" stroke="#55603f" stroke-width="3.2" opacity="0.9"><path d="M1098,296 Q1085,330 1078,352 T1062,392"/><path d="M1143,296 Q1152,330 1166,350 T1172,392"/><path d="M1168,294 Q1182,320 1192,345"/><path d="M1122,294 Q1106,318 1098,338"/><path d="M1108,292 l-4,14 M1132,292 l3,16 M1155,292 l4,12 M1085,294 l-5,14" stroke-width="5"/><path d="M1040,468 Q1070,480 1092,500 T1074,548" stroke="#5c6448" stroke-width="2.4"/></g>
<rect x="820" y="140" width="620" height="480" filter="url(#patch)" opacity="0.3"/>
<rect x="820" y="140" width="620" height="480" filter="url(#tex2)" opacity="0.22"/>
<rect x="820" y="140" width="620" height="480" filter="url(#tex)" opacity="0.28"/>
<rect x="820" y="140" width="620" height="480" filter="url(#tex3)" opacity="0.25"/>
</g>
<g clip-path="url(#cpMad)">
<rect x="1155" y="470" width="160" height="170" fill="#9c957e"/>
<g filter="url(#bl4)">
<ellipse cx="1250" cy="498" rx="22" ry="22" fill="#697656" opacity="0.95" transform="rotate(30 1250 498)"/>
<ellipse cx="1215" cy="525" rx="18" ry="14" fill="#747c57" opacity="0.9"/>
<ellipse cx="1180" cy="580" rx="18" ry="10" fill="#787b5c" opacity="0.9"/>
<ellipse cx="1285" cy="570" rx="22" ry="35" fill="#cdae8b" opacity="0.95"/>
<ellipse cx="1262" cy="600" rx="30" ry="14" fill="#c5ad91" opacity="0.9"/>
<ellipse cx="1235" cy="560" rx="18" ry="20" fill="#9a9680" opacity="0.8"/>
<ellipse cx="1235" cy="622" rx="10" ry="8" fill="#98844f" opacity="0.9"/>
</g>
<rect x="1155" y="470" width="160" height="170" filter="url(#patch)" opacity="0.3"/>
<rect x="1155" y="470" width="160" height="170" filter="url(#tex2)" opacity="0.2"/>
<rect x="1155" y="470" width="160" height="170" filter="url(#tex)" opacity="0.28"/>
<rect x="1155" y="470" width="160" height="170" filter="url(#tex3)" opacity="0.3"/>
</g>
<g clip-path="url(#cpRio)">
<rect x="1630" y="260" width="120" height="80" fill="#57634a"/>
<g filter="url(#bl4)">
<ellipse cx="1665" cy="300" rx="16" ry="8" fill="#8e9073" opacity="0.95" transform="rotate(35 1665 300)"/>
<ellipse cx="1680" cy="296" rx="10" ry="6" fill="#8e8e6d" opacity="0.8"/>
<ellipse cx="1672" cy="318" rx="18" ry="9" fill="#929473" opacity="0.95"/>
<ellipse cx="1705" cy="312" rx="10" ry="7" fill="#898e69" opacity="0.9"/>
<ellipse cx="1690" cy="325" rx="20" ry="6" fill="#4c5942" opacity="0.9"/>
<ellipse cx="1735" cy="322" rx="8" ry="8" fill="#8e7e5b" opacity="0.9"/>
<ellipse cx="1650" cy="278" rx="8" ry="8" fill="#4e5d42" opacity="0.9"/>
</g>
<rect x="1630" y="260" width="120" height="80" filter="url(#tex2)" opacity="0.45"/>
<rect x="1630" y="260" width="120" height="80" filter="url(#tex)" opacity="0.3"/>
<rect x="1630" y="260" width="120" height="80" filter="url(#tex3)" opacity="0.2"/>
</g>
<g clip-path="url(#cpSou)">
<rect x="890" y="705" width="640" height="270" fill="#9c8a69"/>
<g filter="url(#bl8)">
<ellipse cx="1030" cy="760" rx="95" ry="40" fill="#bc9e75" opacity="0.95" transform="rotate(12 1030 760)"/>
<ellipse cx="1080" cy="790" rx="70" ry="22" fill="#c9a97f" opacity="0.9" transform="rotate(18 1080 790)"/>
<ellipse cx="1110" cy="745" rx="35" ry="25" fill="#c1a683" opacity="0.9"/>
<ellipse cx="1000" cy="772" rx="18" ry="14" fill="#b98d67" opacity="0.8"/>
<ellipse cx="1047" cy="730" rx="28" ry="12" fill="#717c59" opacity="0.9"/>
<ellipse cx="1120" cy="730" rx="22" ry="10" fill="#7d7d5d" opacity="0.7"/>
<ellipse cx="965" cy="800" rx="30" ry="26" fill="#8d8469" opacity="0.95"/>
<ellipse cx="1040" cy="852" rx="115" ry="30" fill="#8b8365" opacity="0.95" transform="rotate(6 1040 852)"/>
<ellipse cx="1130" cy="838" rx="40" ry="22" fill="#848067" opacity="0.8"/>
<ellipse cx="930" cy="860" rx="25" ry="18" fill="#8b8264" opacity="0.8"/>
<ellipse cx="940" cy="915" rx="42" ry="38" fill="#a2916d" opacity="0.9"/>
<ellipse cx="960" cy="900" rx="18" ry="20" fill="#887f61" opacity="0.7"/>
<ellipse cx="1170" cy="870" rx="45" ry="18" fill="#ccb996" opacity="0.95"/>
<ellipse cx="1195" cy="908" rx="28" ry="20" fill="#cdc6ad" opacity="0.95"/>
<ellipse cx="1185" cy="830" rx="30" ry="14" fill="#7b7b59" opacity="0.8"/>
</g><g filter="url(#bl4)">
<ellipse cx="1245" cy="818" rx="50" ry="14" fill="#737955" opacity="0.95"/>
<ellipse cx="1270" cy="832" rx="55" ry="12" fill="#c1a582" opacity="0.95" transform="rotate(-10 1270 832)"/>
<ellipse cx="1250" cy="866" rx="55" ry="22" fill="#ece4cd" opacity="0.95"/>
<ellipse cx="1215" cy="880" rx="18" ry="10" fill="#ddd4b9" opacity="0.9"/>
<ellipse cx="1330" cy="842" rx="22" ry="38" fill="#687354" opacity="0.95" transform="rotate(12 1330 842)"/>
<ellipse cx="1335" cy="800" rx="18" ry="10" fill="#b09d79" opacity="0.9"/>
<ellipse cx="1330" cy="882" rx="30" ry="7" fill="#e5cca8" opacity="0.9"/>
<ellipse cx="1378" cy="856" rx="24" ry="14" fill="#debb8e" opacity="0.95"/>
<ellipse cx="1385" cy="826" rx="14" ry="8" fill="#79805b" opacity="0.9"/>
<ellipse cx="1405" cy="818" rx="14" ry="7" fill="#80845a" opacity="0.9"/>
<ellipse cx="1440" cy="836" rx="42" ry="24" fill="#ede7d5" opacity="0.95"/>
<ellipse cx="1425" cy="830" rx="10" ry="8" fill="#75805a" opacity="0.8"/>
<ellipse cx="1450" cy="858" rx="10" ry="7" fill="#7b805d" opacity="0.8"/>
<ellipse cx="1470" cy="786" rx="28" ry="30" fill="#f6dfb9" opacity="1"/>
<ellipse cx="1484" cy="878" rx="30" ry="18" fill="#e9c9a0" opacity="0.95"/>
<ellipse cx="1428" cy="905" rx="30" ry="20" fill="#c0b399" opacity="0.95"/>
<ellipse cx="1460" cy="880" rx="14" ry="8" fill="#9d9677" opacity="0.7"/>
<ellipse cx="1395" cy="878" rx="12" ry="8" fill="#8b896d" opacity="0.7"/>
</g>
<path d="M903,946 Q925,943 943,946.5 T988,971 L988,976 L900,976Z" fill="#2c3e50" filter="url(#bl2)" opacity="0.85"/>
<path d="M1506,868 q6,-2 8,6 q3,6 1,14 q-6,2 -10,-6 q-3,-8 1,-14z" fill="#2d3c4a"/>
<rect x="1200" y="750" width="330" height="190" filter="url(#patch)" opacity="0.75"/>
<rect x="890" y="705" width="310" height="270" filter="url(#patch)" opacity="0.35"/>
<rect x="1200" y="750" width="330" height="190" filter="url(#patchL)" opacity="0.55"/>
<rect x="890" y="705" width="640" height="270" filter="url(#tex2)" opacity="0.2"/>
<rect x="890" y="705" width="640" height="270" filter="url(#tex)" opacity="0.28"/>
<rect x="890" y="705" width="640" height="270" filter="url(#tex3)" opacity="0.3"/>
</g>
</svg>
</div>

<div id="statusbar">
 <div class="sp" style="left:0px;width:98px"><span style="left:5.3px;letter-spacing:0.274px">MapsID: 4591</span></div>
 <div class="sp" style="left:102px;width:77px"><span style="left:1.5px;letter-spacing:-0.073px">png</span></div>
 <div class="sp" style="left:182px;width:97px"><span style="left:1.3px;letter-spacing:0.365px">MinZoom: 6</span></div>
 <div class="sp" style="left:282px;width:97px"><span style="left:1.3px;letter-spacing:0.376px">MaxZoom: 18</span></div>
 <div class="sp" style="left:382px;width:97px"><span style="left:1.3px;letter-spacing:0.429px">TileSize: 256</span></div>
 <div class="sp" style="left:482px;width:97px"><span style="left:1.4px;letter-spacing:-0.097px">EPSG:3857</span></div>
 <div class="sp" style="left:582px;width:1337px"><span style="left:1.4px;letter-spacing:0.485px">Longitude=-2.625732, Latitude=41.409776, tile=7/63/47.png</span></div>
</div>
</body></html>
